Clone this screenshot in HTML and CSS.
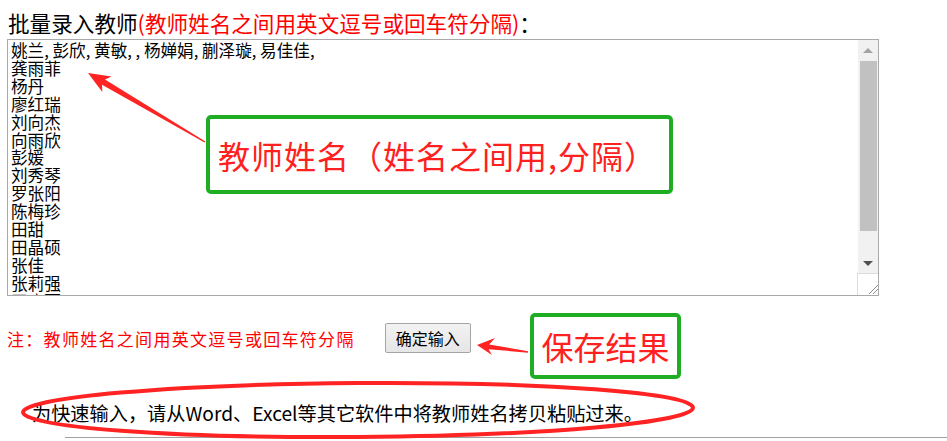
FILE: index.html
```html
<!DOCTYPE html>
<html lang="zh-CN">
<head>
<meta charset="UTF-8">
<meta name="viewport" content="width=device-width, initial-scale=1.0">
<title>批量录入教师</title>
<link rel="stylesheet" href="styles.css">
</head>
<body>
<div id="page">
    <h3 class="title">批量录入教师<span class="red">(教师姓名之间用英文逗号或回车符分隔)</span>：</h3>
    <div class="names-box">
        <textarea class="names">姚兰, 彭欣, 黄敏, , 杨婵娟, 蒯泽璇, 易佳佳,
龚雨菲
杨丹
廖红瑞
刘向杰
向雨欣
彭媛
刘秀琴
罗张阳
陈梅珍
田甜
田晶硕
张佳
张莉强
王晓丽
李明</textarea>
        <div class="scroll">
            <div class="arrow"><i class="up"></i></div>
            <div class="track"><div class="thumb"></div></div>
            <div class="arrow"><i class="down"></i></div>
            <div class="grip">
                <svg width="21" height="21" viewBox="0 0 21 21">
                    <path d="M11 20 L20 11 M15 20 L20 15" stroke="#8a8a8a" stroke-width="1" fill="none"/>
                </svg>
            </div>
        </div>
    </div>
    <div class="row">
        <span class="note">注：教师姓名之间用英文逗号或回车符分隔</span>
        <button class="btn">确定输入</button>
    </div>
    <p class="tip">为快速输入，请从Word、Excel等其它软件中将教师姓名拷贝粘贴过来。</p>
    <div class="line"></div>

    <div class="callout big">教师姓名（姓名之间用,分隔）</div>
    <div class="callout small">保存结果</div>
    <svg class="marks" width="947" height="441" viewBox="0 0 947 441">
        <polygon fill="#ff2323" points="88,73 111.5,76.5 105,79.5 205.4,141.5 204.6,142.5 102,84.7 102.3,91.9"/>
        <polygon fill="#ff2323" points="477,345 495,338 489.2,344.4 528.1,351.3 527.9,352.7 488.6,349.2 492,355"/>
        <ellipse cx="358" cy="410" rx="335" ry="27" fill="none" stroke="#ff2323" stroke-width="4" transform="rotate(-0.4 358 410)"/>
    </svg>
</div>
</body>
</html>
```

FILE: styles.css
```css
body {margin: 0;background: #fff;font-family: "Noto Sans CJK SC", "Microsoft YaHei", sans-serif;color: #000;}
#page {position: relative;width: 947px;height: 441px;overflow: hidden;}
.red {color: #ff0000;}
.title {margin: 0;padding: 10px 0 0 8px;font-size: 21.6px;line-height: 26px;font-weight: normal;}
.names-box {display: flex;margin: 3px 0 0 7px;width: 872px;height: 257px;box-sizing: border-box;border: 1px solid #a9a9a9;}
.names {flex: 1;display: block;margin: 0;padding: 2px 3px;border: 0;font: 16.6px/17.9px "Noto Sans CJK SC", sans-serif;color: #000;resize: none;overflow: hidden;outline: none;}
.scroll {display: flex;flex-direction: column;width: 20px;background: #f1f1f1;}
.arrow {display: flex;align-items: center;justify-content: center;height: 20px;}
.arrow i {width: 0;height: 0;border-left: 5px solid transparent;border-right: 5px solid transparent;}
.arrow .up {border-bottom: 5px solid #a3a3a3;}
.arrow .down {border-top: 5px solid #505050;}
.track {height: 193px;}
.thumb {margin: 1px 1px 0 2px;height: 170px;background: #c1c1c1;}
.grip {box-sizing: border-box;height: 22px;margin-left: -1px;background: #fff;border-left: 1px solid #dcdcdc;border-top: 1px solid #dcdcdc;}
.grip svg {display: block;}
.row {display: flex;align-items: center;margin-top: 27px;padding-left: 7px;height: 30px;}
.note {font-size: 17px;letter-spacing: 1.3px;color: #ff0000;}
.btn {margin-left: 30px;width: 86px;height: 30px;padding: 0;font: 16px "Noto Sans CJK SC", sans-serif;color: #000;background: linear-gradient(#f2f2f2, #e6e6e6);border: 1px solid #a5a5a5;border-radius: 2px;}
.tip {margin: 47px 0 0;padding-left: 32px;font-size: 19.2px;line-height: 26px;}
.line {margin: 11px 0 0 65px;border-top: 1px solid #a0a0a0;}
.callout {position: absolute;box-sizing: border-box;display: flex;align-items: center;border: 4px solid #1fae23;border-radius: 5px;background: #fff;color: #ff2020;font-size: 32px;line-height: 36px;}
.big {left: 206px;top: 115px;width: 467px;height: 79px;padding-left: 8px;letter-spacing: 1px;}
.small {left: 530px;top: 313px;width: 151px;height: 66px;justify-content: center;}
.marks {position: absolute;left: 0;top: 0;pointer-events: none;}
```
